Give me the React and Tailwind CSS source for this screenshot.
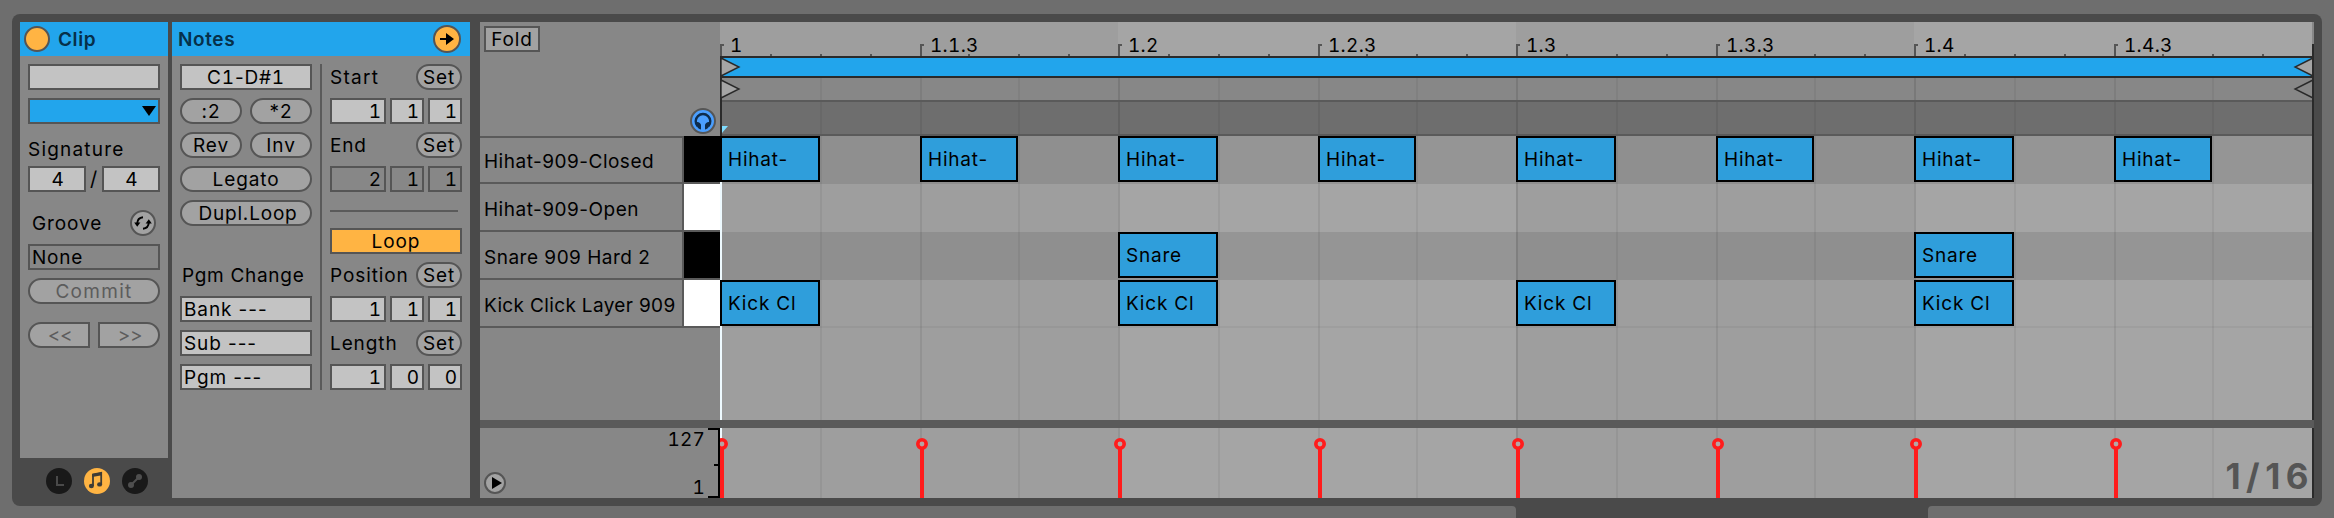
import React from 'react';

const cx = (...a) => a.filter(Boolean).join(' ');

function Field({ className = '', children }) {
  return (
    <div className={cx('flex h-[26px] shrink-0 items-center overflow-hidden whitespace-nowrap border-2 border-[#555]', className)}>
      {children}
    </div>
  );
}

function Pill({ className = '', children }) {
  return (
    <button className={cx('flex h-[26px] shrink-0 items-center justify-center whitespace-nowrap border-2 border-[#555] bg-[#a2a2a2]', className || 'w-full rounded-full')}>
      {children}
    </button>
  );
}

function Triple({ values, dim }) {
  const bg = dim ? 'bg-[#878787]' : 'bg-[#c3c3c3]';
  return (
    <div className="flex h-[26px] gap-1 tabular-nums">
      <Field className={cx('w-14 justify-end pr-[2px]', bg)}>{values[0]}</Field>
      <Field className={cx('w-[34px] justify-end pr-[2px]', bg)}>{values[1]}</Field>
      <Field className={cx('w-[34px] justify-end pr-[2px]', bg)}>{values[2]}</Field>
    </div>
  );
}

function SetRow({ label, tracking }) {
  return (
    <div className="flex h-[26px] items-center justify-between">
      <span className={tracking}>{label}</span>
      <Pill className="w-[46px] rounded-full tracking-[0.9px]">Set</Pill>
    </div>
  );
}

function ClipPanel() {
  return (
    <section className="flex w-[148px] flex-col">
      <div className="h-[436px] bg-[#878787]">
        <header className="flex h-[34px] items-center gap-2 bg-[#22a5ec] pl-1 text-[#06304a]">
          <span className="size-[26px] rounded-full border-2 border-[#555] bg-[#ffb443]" />
          <span className="font-semibold tracking-[0.6px]">Clip</span>
        </header>
        <div className="flex flex-col gap-2 px-2 pt-2">
          <Field className="bg-[#c3c3c3]" />
          <Field className="justify-end bg-[#22a5ec] pr-[2px]">
            <svg width="14" height="10" viewBox="0 0 14 10"><path d="M0 0H14L7 10Z" fill="#000" /></svg>
          </Field>
          <div className="flex h-[26px] items-center pt-2 tracking-[1.2px]">Signature</div>
          <div className="flex items-center justify-between tabular-nums">
            <Field className="w-[58px] justify-center bg-[#c3c3c3] pl-[2px]">4</Field>
            <span className="text-[20px] leading-none">/</span>
            <Field className="w-[58px] justify-center bg-[#c3c3c3] pl-[2px]">4</Field>
          </div>
          <div className="mt-[10px] flex h-[26px] items-center justify-between pl-1 pr-1">
            <span className="tracking-[0.9px]">Groove</span>
            <span className="flex size-[26px] items-center justify-center rounded-full border-2 border-[#555] bg-[#a2a2a2]">
              <svg width="18" height="18" viewBox="0 0 18 18" fill="none">
                <path d="M3.2 9.5C3.4 6.2 5.4 3.6 9 3.3" stroke="#000" strokeWidth="2" />
                <path d="M0.2 8.6H6.4L3.2 12.8Z" fill="#000" />
                <path d="M14.8 8.5C14.6 11.8 12.6 14.4 9 14.7" stroke="#000" strokeWidth="2" />
                <path d="M17.8 9.4H11.6L14.8 5.2Z" fill="#000" />
              </svg>
            </span>
          </div>
          <Field className="pl-[2px] tracking-[0.8px]">None</Field>
          <Pill className="w-full rounded-full tracking-[1.3px] text-[#5c5c5c]">Commit</Pill>
          <div className="mt-[10px] flex justify-between tracking-[-0.4px] text-[#5c5c5c]">
            <Pill className="w-[62px] rounded-l-full pl-[2px]">&lt;&lt;</Pill>
            <Pill className="w-[62px] rounded-r-full pl-[2px]">&gt;&gt;</Pill>
          </div>
        </div>
      </div>
      <div className="flex gap-3 pl-[26px] pt-[10px]">
        <span className="flex size-[26px] items-center justify-center rounded-full bg-[#191919]">
          <svg width="26" height="26" viewBox="0 0 26 26" fill="none"><path d="M11 8V17H18" stroke="#4a4a4a" strokeWidth="2" /></svg>
        </span>
        <span className="flex size-[26px] items-center justify-center rounded-full bg-[#ffb443]">
          <svg width="26" height="26" viewBox="0 0 26 26" fill="none">
            <path d="M9 18V6.4L17.2 4.9V16.5" stroke="#3f3c36" strokeWidth="1.8" />
            <path d="M8.2 6L18 4.2V7.2L8.2 9Z" fill="#3f3c36" />
            <ellipse cx="7.4" cy="18" rx="2.5" ry="2.2" fill="#3f3c36" />
            <ellipse cx="15.6" cy="16.4" rx="2.5" ry="2.2" fill="#3f3c36" />
          </svg>
        </span>
        <span className="flex size-[26px] items-center justify-center rounded-full bg-[#191919]">
          <svg width="26" height="26" viewBox="0 0 26 26" fill="#4f4f4f">
            <circle cx="9" cy="17" r="3" /><circle cx="17" cy="9" r="3" />
            <path d="M9 17L17 9" stroke="#4f4f4f" strokeWidth="2" />
          </svg>
        </span>
      </div>
    </section>
  );
}

function NotesPanel() {
  return (
    <section className="w-[298px] bg-[#878787]">
      <header className="flex h-[34px] items-center justify-between bg-[#22a5ec] pl-[6px] pr-[9px] text-[#06304a]">
        <span className="font-semibold tracking-[0.6px]">Notes</span>
        <span className="flex size-7 items-center justify-center rounded-full border-2 border-[#555] bg-[#ffb443]">
          <svg width="16" height="14" viewBox="0 0 16 14"><path d="M1 6H7V1L15 7L7 13V8H1Z" fill="#000" /></svg>
        </span>
      </header>
      <div className="flex px-2 pt-2">
        <div className="flex w-[132px] flex-col gap-2">
          <Field className="justify-center bg-[#c3c3c3] tracking-[0.8px]">
            <span>C<span className="tabular-nums">1</span>-D#<span className="tabular-nums">1</span></span>
          </Field>
          <div className="flex gap-2">
            <Pill className="w-[62px] rounded-full">:2</Pill>
            <Pill className="w-[62px] rounded-full">*2</Pill>
          </div>
          <div className="flex gap-2">
            <Pill className="w-[62px] rounded-full">Rev</Pill>
            <Pill className="w-[62px] rounded-full">Inv</Pill>
          </div>
          <Pill>Legato</Pill>
          <Pill className="w-full rounded-full pl-1 tracking-[0.8px]">Dupl.Loop</Pill>
          <div className="mt-7 flex h-[26px] items-center whitespace-nowrap pl-[2px] tracking-[0.7px]">Pgm Change</div>
          <Field className="bg-[#c3c3c3] pl-[2px]">Bank ---</Field>
          <Field className="bg-[#c3c3c3] pl-[2px]">Sub ---</Field>
          <Field className="bg-[#c3c3c3] pl-[2px]">Pgm ---</Field>
        </div>
        <div className="ml-2 mr-2 h-[326px] w-[2px] bg-[#5a5a5a]" />
        <div className="flex w-[132px] flex-col gap-2">
          <SetRow label="Start" tracking="tracking-[1.3px]" />
          <Triple values={[1, 1, 1]} />
          <SetRow label="End" tracking="tracking-[0.8px]" />
          <Triple values={[2, 1, 1]} dim />
          <div className="mt-[10px] h-[2px] w-32 bg-[#5a5a5a]" />
          <Field className="mt-2 justify-center bg-[#ffb443]">Loop</Field>
          <SetRow label="Position" tracking="tracking-[0.9px]" />
          <Triple values={[1, 1, 1]} />
          <SetRow label="Length" tracking="tracking-[0.9px]" />
          <Triple values={[1, 0, 0]} />
        </div>
      </div>
    </section>
  );
}

const KEYS = [
  { name: 'Hihat-909-Closed', black: true, tracking: 'tracking-[0.5px]' },
  { name: 'Hihat-909-Open', black: false, tracking: 'tracking-[0.5px]' },
  { name: 'Snare 909 Hard 2', black: true, tracking: 'tracking-[0.5px]' },
  { name: 'Kick Click Layer 909', black: false, tracking: 'tracking-[0.35px]' },
];

function KeyColumn() {
  return (
    <div className="flex w-60 flex-col bg-[#878787]">
      <div className="flex h-[114px] justify-between pl-1 pr-1 pt-1">
        <Field className="w-14 justify-center bg-[#a2a2a2]">Fold</Field>
        <svg className="mb-[2px] self-end" width="26" height="26" viewBox="0 0 26 26" fill="none">
          <circle cx="13" cy="13" r="12" fill="#4b9fff" stroke="#555" strokeWidth="2" />
          <path d="M7.6 18.2A7.3 7.3 0 1 1 18.4 18.2" stroke="#0e2c4c" strokeWidth="2.4" />
          <path d="M6 14.2C8 13.2 11 15 11 17V21.4C8.2 21 6.2 18.6 6 14.2Z" fill="#0e2c4c" />
          <path d="M20 14.2C18 13.2 15 15 15 17V21.4C17.8 21 19.8 18.6 20 14.2Z" fill="#0e2c4c" />
        </svg>
      </div>
      {KEYS.map((k, i) => (
        <div key={k.name} className="flex h-12">
          <div className={cx('flex w-[204px] items-center whitespace-nowrap border-b-2 border-r-2 border-[#5a5a5a] pl-1', i === 0 ? 'border-t-2 pt-[2px]' : 'pt-1', k.tracking)}>
            {k.name}
          </div>
          <div className={cx('w-9 border-b-2 border-[#5a5a5a]', k.black ? 'bg-black' : 'bg-white')} />
        </div>
      ))}
    </div>
  );
}

const BEATS = [
  { major: '1', minor: '1.1.3', bg: 'bg-[#9e9e9e]' },
  { major: '1.2', minor: '1.2.3', bg: 'bg-[#a5a5a5]' },
  { major: '1.3', minor: '1.3.3', bg: 'bg-[#9e9e9e]' },
  { major: '1.4', minor: '1.4.3', bg: 'bg-[#a5a5a5]' },
];

function RulerHalf({ label, width, ticks }) {
  return (
    <div className={cx('relative h-full', width)}>
      <svg className="absolute left-0 top-0" width="200" height="34" fill="#555">
        <path d="M0 22H4V24H2V34H0Z" />
        {ticks.map((x) => <rect key={x} x={x} y="32" width="2" height="2" />)}
      </svg>
      <span className="relative block pl-[10px] pt-3 leading-6 tracking-[0.3px] tabular-nums">{label}</span>
    </div>
  );
}

function Columns({ className = '', shaded }) {
  return (
    <div className={cx('flex', className)}>
      {BEATS.map((b) => (
        <div key={b.major} className={cx('flex w-[398px] shrink-0', shaded ? b.bg : '')}>
          <div className="w-[100px] border-l-2 border-black/10" />
          <div className="w-[100px] border-l-2 border-black/5" />
          <div className="w-[98px] border-l-2 border-black/[0.07]" />
          <div className="w-[100px] border-l-2 border-black/5" />
        </div>
      ))}
    </div>
  );
}

const STEP_X = [0, 200, 398, 598, 796, 996, 1194, 1394];
const NOTES = [
  ...STEP_X.map((x, i) => ({ x, y: 0, w: i % 2 ? 98 : 100, label: 'Hihat-' })),
  ...[398, 1194].map((x) => ({ x, y: 96, w: 100, label: 'Snare' })),
  ...[0, 398, 796, 1194].map((x) => ({ x, y: 144, w: 100, label: 'Kick Cl' })),
];

function Timeline() {
  return (
    <div className="relative flex w-[1594px] flex-col">
      <div className="flex h-[34px] bg-[#878787]">
        {BEATS.map((b) => (
          <div key={b.major} className={cx('flex w-[398px] shrink-0', b.bg)}>
            <RulerHalf label={b.major} width="w-[200px]" ticks={[50, 100, 150]} />
            <RulerHalf label={b.minor} width="w-[198px]" ticks={[48, 98, 148]} />
          </div>
        ))}
      </div>
      <div className="h-[22px] w-[1592px] border-y-2 border-[#2a2a2a] bg-[#22a5ec]" />
      <Columns className="h-6 w-[1592px] border-b-2 border-[#5a5a5a] bg-[#878787]" />
      <Columns className="h-[34px] w-[1592px] border-b-2 border-[#5a5a5a] bg-[#6e6e6e]" />
      <svg className="absolute left-0 top-[34px]" width="1594" height="80" fill="none">
        <rect x="0" y="0" width="2" height="80" fill="#2a2a2a" />
        <path d="M1 2L19 11L1 20Z" fill="#a5a5a5" stroke="#2a2a2a" strokeWidth="1.4" />
        <path d="M1 24L19 33L1 42Z" fill="#a5a5a5" stroke="#2a2a2a" strokeWidth="1.4" />
        <path d="M1593 2L1575 11L1593 20Z" fill="#a5a5a5" stroke="#2a2a2a" strokeWidth="1.4" />
        <path d="M1593 24L1575 33L1593 42Z" fill="#878787" stroke="#2a2a2a" strokeWidth="1.4" />
        <path d="M2 70H8L2 77Z" fill="#7fdcff" />
      </svg>
      <div className="relative h-[284px]">
        <Columns className="h-full w-[1592px]" shaded />
        <div className="absolute inset-0 flex w-[1592px] flex-col">
          <div className="h-12 bg-black/[0.095]" />
          <div className="h-12" />
          <div className="h-12 bg-black/[0.095]" />
          <div className="h-12 border-b-2 border-transparent" />
          <div className="-mt-[2px] h-[2px] bg-black/[0.04]" />
        </div>
        <div className="absolute left-0 top-[46px] h-[238px] w-[2px] bg-[#eefaff]" />
        {NOTES.map((n) => (
          <div
            key={`${n.x}-${n.y}`}
            className="absolute flex h-[46px] items-center whitespace-nowrap border-2 border-black bg-[#2f9edb] pl-[6px] pt-[1px] tracking-[0.8px]"
            style={{ left: n.x, top: n.y, width: n.w }}
          >
            {n.label}
          </div>
        ))}
      </div>
      <div className="absolute right-0 top-[22px] h-[376px] w-[2px] bg-[#2a2a2a]" />
    </div>
  );
}

function VelocityLane() {
  return (
    <div className="flex h-[70px]">
      <div className="flex w-60 items-end justify-between bg-[#878787] pl-1">
        <svg className="mb-1" width="22" height="22" viewBox="0 0 22 22">
          <circle cx="11" cy="11" r="10" fill="#a2a2a2" stroke="#555" strokeWidth="2" />
          <path d="M8 5L18 11L8 17Z" fill="#000" />
        </svg>
        <div className="flex h-full">
          <div className="flex flex-col justify-between pr-[3px] text-right leading-6 tracking-[0.2px] tabular-nums">
            <span>127</span>
            <span className="-mb-[2px]">1</span>
          </div>
          <svg width="12" height="70"><path d="M0 0H12V70H0V68H10V38H6V36H10V2H0Z" fill="#000" /></svg>
        </div>
      </div>
      <div className="relative w-[1594px] overflow-hidden bg-[#2a2a2a]">
        <Columns className="h-full w-[1592px]" shaded />
        <svg className="absolute left-0 top-0" width="1592" height="70">
          <rect x="0" y="0" width="2" height="12" fill="#eefaff" />
          {STEP_X.map((x) => (
            <g key={x}>
              <rect x={x} y="20" width="4" height="50" fill="#ff1c1c" />
              <circle cx={x + 2} cy="16" r="4.2" fill="#b5a5a5" stroke="#ff1c1c" strokeWidth="3.6" />
            </g>
          ))}
        </svg>
        <span className="absolute bottom-[2px] right-0 text-[35px] font-bold leading-10 tracking-[5.5px] text-[#555]">1/16</span>
      </div>
    </div>
  );
}

export default function App() {
  return (
    <div className="flex h-[518px] w-[2334px] flex-col overflow-hidden bg-[#6e6e6e] pt-[14px] font-['Inter',sans-serif] text-[19px] leading-none tracking-[0.9px] text-black">
      <main className="ml-3 flex h-[492px] w-[2310px] shrink-0 rounded-[8px] bg-[#4a4a4a] p-2">
        <ClipPanel />
        <div className="w-1" />
        <NotesPanel />
        <section className="ml-[10px] flex w-[1834px] flex-col">
          <div className="flex h-[398px]">
            <KeyColumn />
            <Timeline />
          </div>
          <div className="h-2 bg-[#5a5a5a]" />
          <VelocityLane />
        </section>
      </main>
      <footer className="flex h-3 shrink-0 bg-[#4a4a4a]">
        <div className="w-[1516px] rounded-tr-[4px] bg-[#6e6e6e]" />
        <div className="w-[412px]" />
        <div className="flex-1 rounded-tl-[4px] bg-[#6e6e6e]" />
      </footer>
    </div>
  );
}
